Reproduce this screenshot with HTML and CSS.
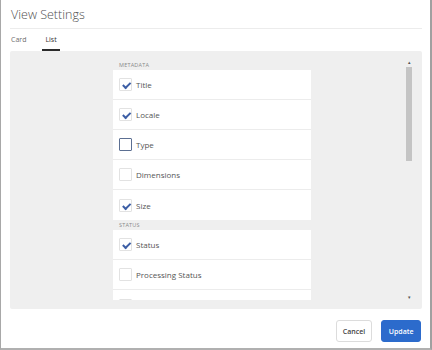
FILE: index.html
```html
<!DOCTYPE html>
<html lang="en">
<head>
  <meta charset="UTF-8">
  <title>View Settings</title>
  <link rel="stylesheet" href="styles.css">
</head>
<body>

<div class="dialog">
  <div class="dialog-header">View Settings</div>

  <div class="tabs">
    <span class="tab">Card</span>
    <span class="tab active">List</span>
  </div>

  <div class="panel">
    <div class="scroll-area">
      <div class="list">
        <div class="group-label">METADATA</div>
        <div class="group">
          <div class="row"><span class="box checked"></span>Title</div>
          <div class="row"><span class="box checked"></span>Locale</div>
          <div class="row"><span class="box focus"></span>Type</div>
          <div class="row"><span class="box"></span>Dimensions</div>
          <div class="row"><span class="box checked"></span>Size</div>
        </div>

        <div class="group-label">STATUS</div>
        <div class="group">
          <div class="row"><span class="box checked"></span>Status</div>
          <div class="row"><span class="box"></span>Processing Status</div>
          <!-- next row is scrolled out of view, only its box peeks in -->
          <div class="row"><span class="box"></span></div>
        </div>
      </div>
    </div>

    <!-- fake scrollbar -->
    <div class="scrollbar">
      <span class="arrow">&#9652;</span>
      <div class="track"><div class="thumb"></div></div>
      <span class="arrow">&#9662;</span>
    </div>
  </div>

  <div class="footer">
    <button class="btn">Cancel</button>
    <button class="btn primary">Update</button>
  </div>
</div>

</body>
</html>
```

FILE: styles.css
```css
:root {
  --text: #4b4b4b;
  --muted: #8a8a8a;
  --panel: #efefef;
  --line: #ececec;
  --accent: #2c6bcc;
  --check: #3d5fa6;
}

body {
  margin: 0;
  font-family: "Open Sans", Arial, sans-serif;
  color: var(--text);
  background: #fff;
}

.dialog {
  width: 412px;
  height: 348px;
  padding: 0 8px 0 9px;
  border-left: 1px solid #a8a8a8;
  border-right: 2px solid #a0a0a0;
  border-bottom: 2px solid #b0b0b0;
  background: #fff;
  display: flex;
  flex-direction: column;
}

.dialog-header {
  height: 28px;
  line-height: 29px;
  font-size: 12.5px;
  font-weight: 300;
  color: #505050;
  padding-left: 1px;
  border-bottom: 1px solid #ececec;
}

.tabs {
  display: flex;
  gap: 18px;
  height: 22px;
  align-items: flex-end;
}

.tab {
  font-size: 7px;
  color: #6e6e6e;
  padding: 0 0 5px;
  border-bottom: 2px solid transparent;
}

.tab:first-child {
  margin-left: 1px;
}

.tab.active {
  color: #333;
  padding: 0 3px 5px;
  margin-left: -2px;
  border-bottom-color: #2b2b2b;
}

.panel {
  position: relative;
  height: 258px;
  background: var(--panel);
  border-radius: 2px;
  padding: 9px 0;
  box-sizing: border-box;
}

.scroll-area {
  height: 240px;
  overflow: hidden;
  display: flex;
  justify-content: center;
}

.list {
  width: 198px;
  margin-right: 8px;
}

.group-label {
  height: 10px;
  line-height: 11px;
  font-size: 5.5px;
  letter-spacing: 0.2px;
  color: var(--muted);
  padding-left: 6px;
}

.group {
  background: #fff;
}

.row {
  height: 29px;
  border-bottom: 1px solid var(--line);
  display: flex;
  align-items: center;
  gap: 4px;
  padding-left: 6px;
  font-size: 8px;
  color: #555;
}

.row:last-child {
  border-bottom: none;
  height: 30px;
}

.box {
  width: 11px;
  height: 11px;
  border: 1px solid #e2e2e2;
  border-radius: 1px;
  background: #fff;
  position: relative;
}

.box.focus {
  border-color: #5c6f92;
}

.box.checked::after {
  content: "";
  position: absolute;
  left: 2px;
  top: 1px;
  width: 6px;
  height: 3px;
  border-left: 2px solid var(--check);
  border-bottom: 2px solid var(--check);
  transform: rotate(-45deg) translate(-1px, 2px);
}

.scrollbar {
  position: absolute;
  top: 8px;
  right: 10px;
  bottom: 8px;
  width: 6px;
  display: flex;
  flex-direction: column;
  align-items: center;
}

.arrow {
  font-size: 5px;
  line-height: 7px;
  color: #555;
}

.track {
  flex: 1;
  width: 6px;
}

.thumb {
  height: 94px;
  background: #c4c4c4;
  margin-top: 1px;
}

.footer {
  flex: 1;
  display: flex;
  justify-content: flex-end;
  align-items: flex-start;
  gap: 9px;
  padding: 10px 1px 0 0;
}

.btn {
  height: 22px;
  margin-top: 1px;
  padding: 0 6px;
  font-family: "Open Sans", Arial, sans-serif;
  font-size: 7px;
  font-weight: 600;
  border-radius: 3px;
  border: 1px solid #dcdcdc;
  background: #fff;
  color: #444;
  cursor: pointer;
}

.btn.primary {
  background: var(--accent);
  border-color: var(--accent);
  color: #fff;
  padding: 0 6.5px;
}
```
